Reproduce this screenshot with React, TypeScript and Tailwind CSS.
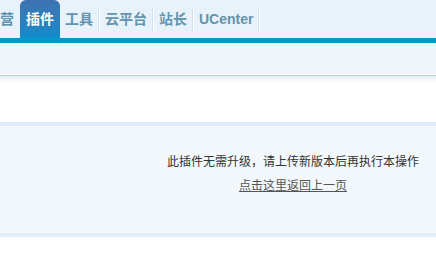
import React from "react";

const navItems = ["工具", "云平台", "站长", "UCenter"];

const App = () => {
  return (
    <div className="w-[436px] h-[269px] overflow-hidden bg-white font-['Liberation_Sans','Noto_Sans_CJK_SC',sans-serif]">
      {/* ==== Top nav ==== */}
      <div className="h-[38px] bg-[#e8f2fb] flex items-stretch whitespace-nowrap text-[14px] font-bold">
        <div className="w-[20px] flex items-center text-[#5b8fab]">营</div>
        <div className="w-[40px] rounded-t-[6px] bg-gradient-to-b from-[#3c72b0] to-[#0b8bca] text-white flex items-center justify-center">
          插件
        </div>
        {navItems.map((item) => (
          <div key={item} className="flex items-center">
            <span className="pl-[5px] pr-[5px] text-[#6294ae]">{item}</span>
            <span className="w-[1px] h-[26px] bg-[#d3e2ee] border-r border-white box-content" />
          </div>
        ))}
      </div>
      <div className="h-[5px] bg-[#0099cc]" />
      <div className="h-[1px] bg-white" />
      <div className="h-[30px] bg-[#f0f7fc]" />
      <div className="h-[1px] bg-white" />
      <div className="h-[1px] bg-[#b9ccd9]" />
      <div className="h-[6px] bg-gradient-to-b from-[#e3eef7] to-white" />

      {/* ==== Message panel ==== */}
      <div className="mt-[40px] border-y-4 border-[#deedf9] bg-[#f2f8fc]">
        <div className="w-[586px] pt-[23px] pb-[36px] text-center text-[12px] leading-[24px] text-[#333] font-['Noto_Sans_CJK_SC',sans-serif]">
          <p>此插件无需升级，请上传新版本后再执行本操作</p>
          <p>
            <a href="#" className="underline text-[#555]">
              点击这里返回上一页
            </a>
          </p>
        </div>
      </div>
    </div>
  );
};

export default App;
